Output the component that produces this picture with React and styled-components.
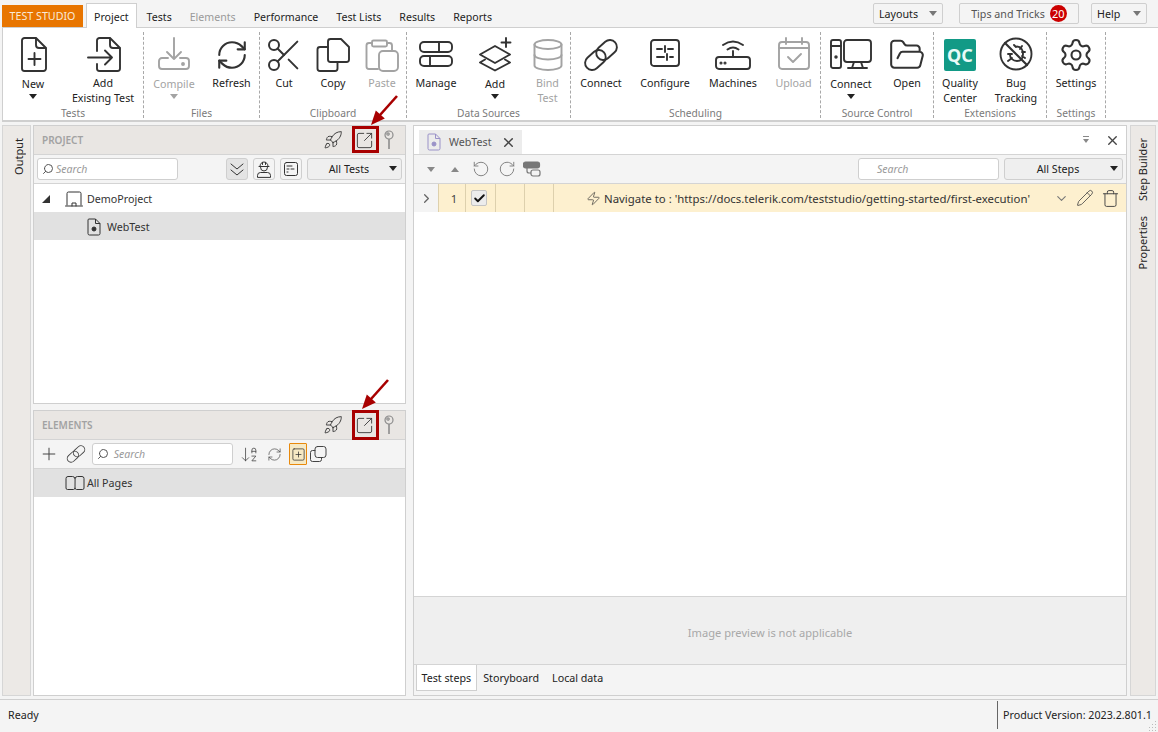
import React from "react";
import styled, { createGlobalStyle } from "styled-components";
import {
  RefreshCw, Scissors, Database, FolderOpen, Settings, Rocket, SquareArrowOutUpRight,
  Search, Plus, SquarePlus, ArrowDownAZ, X, RotateCcw, RotateCw, Zap, ChevronDown, Pencil, Trash, Check,
} from "lucide-react";

const GlobalStyle = createGlobalStyle`
  html, body { margin: 0; padding: 0; }
  body { background: #f4f4f4; font-family: "Noto Sans", "Open Sans", sans-serif; font-size: 10.7px; color: #222; }
  * { box-sizing: border-box; }
`;

const Page = styled.div`
  width: 1158px;
  height: 732px;
  overflow: hidden;
  display: flex;
  flex-direction: column;
  background: #f4f4f4;
`;

const TabRow = styled.div`
  height: 28px;
  display: flex;
  align-items: flex-end;
  padding: 0 11px 0 2px;
  position: relative;
  z-index: 1;
  margin-bottom: -1px;
`;

const Brand = styled.div`
  width: 81px;
  height: 22px;
  margin-right: 3px;
  margin-bottom: 1px;
  background: #e87500;
  color: #f9ead8;
  display: flex;
  align-items: center;
  justify-content: center;
`;

const TopTab = styled.div`
  height: ${(p) => (p.$active ? "25px" : "23px")};
  padding: ${(p) => (p.$active ? "2px 7px 0" : "2px 9px 0")};
  margin: ${(p) => (p.$active ? "0 1px 0 0" : "0 0 1px 0")};
  display: flex;
  align-items: center;
  font-size: 10.6px;
  background: ${(p) => (p.$active ? "#fff" : "transparent")};
  border: ${(p) => (p.$active ? "1px solid #cfcfcf" : "none")};
  border-bottom: none;
  color: ${(p) => (p.$off ? "#9a9a9a" : "#222")};
`;

const TopButtons = styled.div`
  margin-left: auto;
  align-self: flex-start;
  margin-top: 3px;
  display: flex;
`;

const TopButton = styled.div`
  width: ${(p) => p.$w}px;
  margin-left: ${(p) => p.$gap}px;
  height: 21px;
  border: 1px solid #cfcfcf;
  border-radius: 2px;
  background: #f4f4f4;
  display: flex;
  align-items: center;
  justify-content: ${(p) => (p.$center ? "center" : "space-between")};
  padding: 0 5px;
  gap: 5px;
  color: ${(p) => (p.$center ? "#555" : "#222")};
`;

const Caret = styled.span`
  display: block;
  width: 0;
  height: 0;
  border-left: ${(p) => p.$s || 4}px solid transparent;
  border-right: ${(p) => p.$s || 4}px solid transparent;
  border-top: ${(p) => (p.$s || 4) + 1}px solid ${(p) => p.$color || "#777"};
  flex: none;
`;

const CaretUp = styled(Caret)`
  transform: rotate(180deg);
`;

const Badge = styled.span`
  width: 17px;
  height: 17px;
  border-radius: 50%;
  background: #cc0000;
  color: #fff;
  font-size: 11px;
  display: flex;
  align-items: center;
  justify-content: center;
`;

const Ribbon = styled.div`
  height: 95px;
  margin-left: 2px;
  padding-top: 4px;
  background: #fff;
  border-left: 1px solid #cfcfcf;
  border-top: 1px solid #cfcfcf;
  border-bottom: 2px solid #cfcfcf;
  display: flex;
  align-items: flex-start;
`;

const Group = styled.div`
  width: ${(p) => p.$w}px;
  height: 86px;
  display: flex;
  flex-direction: column;
  border-right: 1px dashed #a8a8a8;
`;

const GroupItems = styled.div`
  flex: 1;
  display: flex;
`;

const GroupLabel = styled.div`
  height: 14px;
  margin-bottom: -2px;
  line-height: 14px;
  text-align: center;
  color: #7a7a7a;
  font-size: 10.2px;
`;

const Item = styled.div`
  width: ${(p) => p.$w}px;
  padding-top: 5px;
  display: flex;
  flex-direction: column;
  align-items: center;
  color: ${(p) => (p.$off ? "#a3a3a3" : "#333")};
`;

const ItemIcon = styled.div`
  height: 36px;
  display: flex;
  align-items: center;
  justify-content: center;
  margin-bottom: ${(p) => (p.$menu ? 4 : 3)}px;
`;

const ItemLabel = styled.div`
  line-height: 15px;
  text-align: center;
  white-space: nowrap;
  color: ${(p) => (p.$off ? "#a3a3a3" : "#222")};
`;

const ItemCaret = styled.div`
  margin-top: 2px;
`;

const QcMark = styled.div`
  width: 32px;
  height: 32px;
  border-radius: 2px;
  background: #129a86;
  color: #e9fbf7;
  font-size: 18px;
  font-weight: 700;
  display: flex;
  align-items: center;
  justify-content: center;
`;

const Main = styled.div`
  height: 571px;
  margin-top: 3px;
  padding-left: 2px;
  display: flex;
`;

const Rail = styled.div`
  width: ${(p) => p.$w}px;
  margin: ${(p) => p.$margin};
  background: #ece9e6;
  border: 1px solid #d6d6d6;
  padding: 12px ${(p) => p.$right || 0}px 0 ${(p) => p.$left || 0}px;
  display: flex;
  flex-direction: column;
  align-items: center;
  gap: 15px;
`;

const RailText = styled.div`
  writing-mode: vertical-rl;
  transform: rotate(180deg);
  color: #222;
  font-size: 11px;
  line-height: 15px;
`;

const LeftColumn = styled.div`
  width: 373px;
  display: flex;
  flex-direction: column;
  gap: 6px;
`;

const Panel = styled.div`
  height: ${(p) => p.$h}px;
  background: #fff;
  border: 1px solid #cfcfcf;
  display: flex;
  flex-direction: column;
`;

const PanelHead = styled.div`
  height: 29px;
  flex: none;
  display: flex;
  align-items: center;
  padding: 0 6px 0 8px;
  background: #e9e6e3;
  border-bottom: 1px solid #d4d4d4;
  color: #333;
`;

const PanelTitle = styled.div`
  font-size: 10px;
  font-weight: 600;
  color: #a2a2a2;
  margin-right: auto;
`;

const PopOut = styled.div`
  width: 27px;
  height: 27px;
  margin-left: 9px;
  padding-right: 3px;
  position: relative;
  display: flex;
  align-items: center;
  justify-content: center;
`;

const Highlight = styled.div`
  position: absolute;
  left: 0;
  top: ${(p) => p.$top}px;
  width: 27px;
  height: ${(p) => p.$h}px;
  border: 3px solid #a80000;
`;

const ArrowMark = styled.svg`
  position: absolute;
  left: ${(p) => p.$left}px;
  top: -35px;
  z-index: 5;
`;

const PinWrap = styled.div`
  width: 20px;
  display: flex;
  justify-content: center;
  color: #8c8c8c;
`;

const Toolbar = styled.div`
  height: 29px;
  flex: none;
  display: flex;
  align-items: center;
  padding: ${(p) => p.$padding || "0 3px"};
  background: #f4f4f4;
  border-bottom: 1px solid #d4d4d4;
`;

const SearchBox = styled.div`
  width: ${(p) => p.$w}px;
  height: 22px;
  flex: none;
  margin-left: ${(p) => p.$left || 0}px;
  padding-left: ${(p) => p.$inset || 4}px;
  background: #fff;
  border: 1px solid #cfcfcf;
  border-radius: 3px;
  display: flex;
  align-items: center;
  gap: 2px;
  color: #999;
  font-style: italic;
  font-size: 10.5px;
`;

const SearchGlyph = styled(Search)`
  transform: scaleX(-1);
  color: #555;
`;

const ToolButton = styled.div`
  width: 22px;
  height: 22px;
  margin-left: ${(p) => p.$left || 0}px;
  background: ${(p) => (p.$on ? "#e4e4e4" : "#f4f4f4")};
  border: 1px solid #cfcfcf;
  border-radius: 3px;
  display: flex;
  align-items: center;
  justify-content: center;
  color: #333;
`;

const Dropdown = styled.div`
  width: ${(p) => p.$w}px;
  height: 22px;
  margin-left: ${(p) => p.$left}px;
  padding-right: 11px;
  flex: none;
  position: relative;
  background: #efefef;
  border: 1px solid #cfcfcf;
  border-radius: 3px;
  display: flex;
  align-items: center;
  justify-content: center;
  color: #222;
`;

const DropCaret = styled.span`
  position: absolute;
  right: 4px;
  top: 7px;
`;

const TreeRow = styled.div`
  height: 28px;
  flex: none;
  display: flex;
  align-items: center;
  gap: ${(p) => p.$gap || 4}px;
  padding-left: ${(p) => p.$indent}px;
  padding-top: ${(p) => (p.$nudge ? 2 : 0)}px;
  background: ${(p) => (p.$selected ? "#e1e1e1" : "transparent")};
  color: #333;
`;

const TreeArrow = styled.svg`
  margin-right: 11px;
`;

const ElementTool = styled.div`
  width: ${(p) => p.$w || 22}px;
  height: 22px;
  flex: none;
  margin-left: ${(p) => p.$left || 0}px;
  display: flex;
  align-items: center;
  justify-content: center;
  color: ${(p) => p.$color || "#444"};
`;

const ExpandToggle = styled.div`
  width: 18px;
  height: 22px;
  flex: none;
  margin-left: 4px;
  background: #f6e9c4;
  border: 1px solid #e8890c;
  border-radius: 1px;
  display: flex;
  align-items: center;
  justify-content: center;
  color: #333;
`;

const Editor = styled.div`
  width: 714px;
  margin-left: 7px;
  background: #fff;
  border: 1px solid #cfcfcf;
  display: flex;
  flex-direction: column;
`;

const EditorTabs = styled.div`
  height: 29px;
  flex: none;
  display: flex;
  align-items: flex-end;
  padding: 0 6px 0 5px;
  border-bottom: 1px solid #d4d4d4;
`;

const DocTab = styled.div`
  width: 103px;
  height: 24px;
  padding: 0 6px 0 8px;
  display: flex;
  align-items: center;
  gap: 8px;
  background: #ececec;
  color: #555;
`;

const TabClose = styled(X)`
  margin-left: auto;
  color: #444;
`;

const TabTools = styled.div`
  margin-left: auto;
  align-self: center;
  display: flex;
  align-items: center;
  gap: 15px;
  color: #444;
`;

const StepRow = styled.div`
  height: 28px;
  flex: none;
  display: flex;
  background: #fdf0cf;
`;

const StepCell = styled.div`
  width: ${(p) => p.$w}px;
  flex: none;
  padding-left: ${(p) => p.$pad || 0}px;
  display: flex;
  align-items: center;
  justify-content: center;
  border-right: 1px solid #ddd0ad;
  background: ${(p) => (p.$grey ? "#f4f4f4" : "transparent")};
  color: #444;
  font-size: 11.4px;
`;

const StepCheck = styled.div`
  width: 16px;
  height: 16px;
  margin-right: 3px;
  background: #ececec;
  border: 1px solid #c4c4c4;
  border-radius: 2px;
  display: flex;
  align-items: center;
  justify-content: center;
  color: #111;
`;

const StepBody = styled.div`
  flex: 1;
  min-width: 0;
  padding: 0 6px 0 32px;
  display: flex;
  align-items: center;
  gap: 3px;
  color: #333;
  font-size: 11.4px;
  white-space: nowrap;
`;

const StepActions = styled.div`
  margin-left: auto;
  display: flex;
  align-items: center;
  gap: 7px;
  color: #444;
`;

const EditorFill = styled.div`
  flex: 1;
`;

const Preview = styled.div`
  height: 69px;
  flex: none;
  padding-top: 4px;
  background: #efefef;
  border-top: 1px solid #d4d4d4;
  border-bottom: 1px solid #d4d4d4;
  display: flex;
  align-items: center;
  justify-content: center;
  color: #a8a8a8;
  font-size: 11.1px;
`;

const BottomTabs = styled.div`
  height: 30px;
  flex: none;
  display: flex;
  padding-left: 2px;
  background: #f4f4f4;
  color: #222;
`;

const BottomTab = styled.div`
  height: 26px;
  padding: 0 ${(p) => (p.$active ? "4.5px" : "6.5px")};
  display: flex;
  align-items: center;
  background: ${(p) => (p.$active ? "#fff" : "transparent")};
  border: ${(p) => (p.$active ? "1px solid #cfcfcf" : "none")};
  border-top: none;
`;

const StatusBar = styled.div`
  height: 33px;
  margin-top: 3px;
  border-top: 1px solid #cfcfcf;
  padding: 0 0 2px 8px;
  display: flex;
  align-items: center;
  position: relative;
  color: #222;
`;

const StatusVersion = styled.div`
  margin-left: auto;
  width: 161px;
  height: 28px;
  padding-left: 5px;
  border-left: 1px solid #666;
  display: flex;
  align-items: center;
  white-space: nowrap;
`;

const Grip = styled.svg`
  position: absolute;
  right: 0;
  bottom: 0;
`;

const Line = ({ w = 36, h = 36, sw = 1.9, children }) => (
  <svg width={w} height={h} viewBox={`0 0 ${w} ${h}`} fill="none" stroke="currentColor" strokeWidth={sw} strokeLinecap="round" strokeLinejoin="round">
    {children}
  </svg>
);

const NewIcon = () => (
  <Line>
    <path d="M7 3.500A2.500 2.500 0 0 1 9.500 1H21l10 10v20.500a2.500 2.500 0 0 1-2.500 2.500h-19A2.500 2.500 0 0 1 7 31.500z" />
    <path d="M21 1.500V8a3 3 0 0 0 3 3h6.500M19.500 16v12M13.500 22h12" />
  </Line>
);
const AddExistingIcon = () => (
  <Line>
    <path d="M12 14V3.500A2.500 2.500 0 0 1 14.500 1H25l10 10v20.500a2.500 2.500 0 0 1-2.500 2.500h-18a2.500 2.500 0 0 1-2.500-2.500V27" />
    <path d="M25 1.500V8a3 3 0 0 0 3 3h6.500M3 20.500h24M20 13.500l7 7-7 7" />
  </Line>
);
const CompileIcon = () => (
  <Line>
    <path d="M18 1v21M11 15l7 7 7-7" />
    <path d="M12 21H6a3 3 0 0 0-3 3v5a3 3 0 0 0 3 3h24a3 3 0 0 0 3-3v-5a3 3 0 0 0-3-3h-6" />
    <circle cx="27" cy="27" r="1" />
  </Line>
);
const CopyIcon = () => (
  <Line>
    <path d="M13 4.500A2.500 2.500 0 0 1 15.500 2H26l8 8v12.500a2.500 2.500 0 0 1-2.500 2.500h-16a2.500 2.500 0 0 1-2.500-2.500z" />
    <path d="M13 10H5a2.500 2.500 0 0 0-2.500 2.500v19A2.500 2.500 0 0 0 5 34h15a2.500 2.500 0 0 0 2.500-2.500V25" />
  </Line>
);
const PasteIcon = () => (
  <Line>
    <path d="M8 6H5a2.500 2.500 0 0 0-2.500 2.500v21A2.500 2.500 0 0 0 5 32h9M23 6h2.500A2.500 2.500 0 0 1 28 8.500V13" />
    <rect x="8" y="3.500" width="15" height="6" rx="1.500" />
    <rect x="15" y="14" width="19" height="20" rx="4" />
  </Line>
);
const ManageIcon = () => (
  <Line>
    <rect x="2" y="5" width="32" height="10" rx="4" />
    <rect x="2" y="19" width="32" height="10" rx="4" />
    <path d="M21 5v10M12 19v10" />
  </Line>
);
const AddLayersIcon = () => (
  <Line>
    <path d="M18 9L33 17.500 18 26 3 17.500z" />
    <path d="M8 22.500L3 25.500 18 33.500 33 25.500 28 22.500M29 1v9M24.500 5.500h9" />
  </Line>
);
const LinkIcon = ({ size = 40, sw = 1.9 }) => (
  <svg width={size} height={size} viewBox="0 0 40 40" fill="none" stroke="currentColor" strokeWidth={sw}>
    <g transform="rotate(-42 20 20)">
      <rect x="1" y="13" width="23" height="14" rx="7" />
      <rect x="16" y="13" width="23" height="14" rx="7" />
    </g>
  </svg>
);
const ConfigureIcon = () => (
  <Line>
    <rect x="4" y="3" width="28" height="26" rx="3" />
    <path d="M10 12h5M21 12h5M18 9v6M10 20h7M23 20h3M20 17v6" />
  </Line>
);
const MachinesIcon = () => (
  <Line>
    <rect x="1" y="20" width="34" height="12" rx="3" />
    <path d="M18 14v6M8 8q10-7 20 0M12.500 12.500q5.500-4 11 0" />
    <circle cx="6" cy="26" r="0.600" />
    <circle cx="10" cy="26" r="0.600" />
  </Line>
);
const UploadIcon = () => (
  <Line>
    <rect x="3" y="5" width="30" height="27" rx="3" />
    <path d="M10 1v6M26 1v6M3 11h30M12 20l5 5 8-8" />
  </Line>
);
const ComputerIcon = () => (
  <Line w={42}>
    <rect x="1" y="3" width="10" height="28" rx="2" />
    <rect x="14" y="3" width="27" height="22" rx="3" />
    <path d="M1 9h10M24 25l-2 6M31 25l2 6M18 31h19" />
    <circle cx="6" cy="20" r="0.800" />
  </Line>
);
const BugIcon = () => (
  <Line>
    <circle cx="18" cy="17" r="15.500" />
    <path d="M7 6l22 22" strokeWidth="2.200" />
    <path d="M19 9.500c4 0 6 3.500 6 7.500s-2 7-6 7-7-3-7-6M16 8l2 2M24 9l-2 3M27 15h-3M27 21l-3-2M10 17h4M10 24l4-3" />
  </Line>
);

const PinIcon = () => (
  <svg width="12" height="20" viewBox="0 0 12 20" fill="none" stroke="currentColor" strokeWidth="1.200">
    <circle cx="6" cy="5" r="4" />
    <path d="M6 9v10" strokeWidth="1.600" />
    <circle cx="5" cy="4" r="1.200" />
  </svg>
);
const RedArrow = ({ left }) => (
  <ArrowMark $left={left} width="32" height="32" viewBox="0 0 32 32">
    <path d="M29 2L12 21" stroke="#a80000" strokeWidth="2.600" />
    <polygon points="3,31 7.800,16.600 16.800,24.600" fill="#a80000" />
  </ArrowMark>
);
const ChevronPairIcon = () => (
  <Line w={16} h={16} sw={1}>
    <path d="M2 3l6 5 6-5M2 9l6 5 6-5" />
  </Line>
);
const WorkerIcon = () => (
  <Line w={16} h={18} sw={1}>
    <path d="M4 6a4 4 0 0 1 8 0M3 6.500h10M4.500 7.500a3.500 3.500 0 0 0 7 0M1.500 17v-1.500a3 3 0 0 1 3-3h7a3 3 0 0 1 3 3V17zM6.500 2.500v2M9.500 2.500v2" />
  </Line>
);
const NotesIcon = () => (
  <Line w={16} h={16} sw={1}>
    <rect x="1.500" y="1.500" width="13" height="13" rx="2" />
    <path d="M4 5h5M4 8h2M4 11h1M8 8h3" />
  </Line>
);
const ProjectIcon = () => (
  <Line w={18} h={16} sw={1}>
    <path d="M2 14V2.500A1.500 1.500 0 0 1 3.500 1h11A1.500 1.500 0 0 1 16 2.500V14M0.500 15h17M7 15v-3h4v3" />
  </Line>
);
const TestDocIcon = ({ color }) => (
  <svg width="14" height="18" viewBox="0 0 14 18" fill="none" stroke={color} strokeWidth="1">
    <path d="M2 1h6.500L13 5.500V15.500a1.500 1.500 0 0 1-1.500 1.500h-9A1.500 1.500 0 0 1 1 15.500V2A1 1 0 0 1 2 1zM8.500 1v4.500H13" />
    <circle cx="7" cy="11" r="2" fill={color} />
  </svg>
);
const BookIcon = () => (
  <Line w={20} h={16} sw={1}>
    <path d="M10 3.500A2.500 2.500 0 0 0 7.500 1.500H3A2 2 0 0 0 1 3.500V13a1.500 1.500 0 0 0 1.500 1.500h6A1.500 1.500 0 0 0 10 13zM10 3.500a2.500 2.500 0 0 1 2.500-2H17a2 2 0 0 1 2 2V13a1.500 1.500 0 0 1-1.500 1.500h-6A1.500 1.500 0 0 1 10 13" />
  </Line>
);
const CopyTinyIcon = () => (
  <Line w={18} h={18} sw={1}>
    <rect x="6" y="1.500" width="11" height="11" rx="2.500" />
    <path d="M6 5.500H3.500a2 2 0 0 0-2 2V14.500a2 2 0 0 0 2 2H10.500a2 2 0 0 0 2-2V12.500" />
  </Line>
);
const StoryIcon = () => (
  <svg width="18" height="16" viewBox="0 0 18 16" fill="none" stroke="#777" strokeWidth="1.200">
    <rect x="0.500" y="1" width="16" height="6" rx="2" fill="#777" />
    <rect x="8" y="9" width="9" height="6" rx="2" />
    <path d="M4 7v3a2 2 0 0 0 2 2h2" />
  </svg>
);
const PinMenuIcon = () => (
  <svg width="8" height="8" viewBox="0 0 8 8" fill="#888">
    <rect x="1" y="0" width="6" height="1" />
    <polygon points="1,3 7,3 4,7" />
  </svg>
);

const ribbon = [
  { label: "Tests", w: 141, items: [
    { w: 60, icon: <NewIcon />, label: ["New"], menu: true },
    { w: 80, icon: <AddExistingIcon />, label: ["Add", "Existing Test"] },
  ] },
  { label: "Files", w: 116, items: [
    { w: 60, icon: <CompileIcon />, label: ["Compile"], menu: true, off: true },
    { w: 55, icon: <RefreshCw size={34} strokeWidth={1.5} />, label: ["Refresh"] },
  ] },
  { label: "Clipboard", w: 147, items: [
    { w: 48, icon: <Scissors size={40} strokeWidth={1.200} />, label: ["Cut"] },
    { w: 50, icon: <CopyIcon />, label: ["Copy"] },
    { w: 48, icon: <PasteIcon />, label: ["Paste"], off: true },
  ] },
  { label: "Data Sources", w: 164, items: [
    { w: 58, icon: <ManageIcon />, label: ["Manage"] },
    { w: 60, icon: <AddLayersIcon />, label: ["Add"], menu: true },
    { w: 45, icon: <Database size={36} strokeWidth={1.300} />, label: ["Bind", "Test"], off: true },
  ] },
  { label: "Scheduling", w: 250, items: [
    { w: 60, icon: <LinkIcon />, label: ["Connect"] },
    { w: 68, icon: <ConfigureIcon />, label: ["Configure"] },
    { w: 68, icon: <MachinesIcon />, label: ["Machines"] },
    { w: 53, icon: <UploadIcon />, label: ["Upload"], off: true },
  ] },
  { label: "Source Control", w: 113, items: [
    { w: 60, icon: <ComputerIcon />, label: ["Connect"], menu: true },
    { w: 52, icon: <FolderOpen size={38} strokeWidth={1.300} />, label: ["Open"] },
  ] },
  { label: "Extensions", w: 113, items: [
    { w: 52, icon: <QcMark>QC</QcMark>, label: ["Quality", "Center"] },
    { w: 60, icon: <BugIcon />, label: ["Bug", "Tracking"] },
  ] },
  { label: "Settings", w: 59, items: [
    { w: 58, icon: <Settings size={36} strokeWidth={1.400} />, label: ["Settings"] },
  ] },
];

const tabs = ["Tests", "Elements", "Performance", "Test Lists", "Results", "Reports"];

function PanelHeader({ title, boxTop, boxHeight, arrowLeft }) {
  return (
    <PanelHead>
      <PanelTitle>{title}</PanelTitle>
      <Rocket size={20} strokeWidth={1.100} />
      <PopOut>
        <SquareArrowOutUpRight size={19} strokeWidth={1.100} />
        <Highlight $top={boxTop} $h={boxHeight}>
          <RedArrow left={arrowLeft} />
        </Highlight>
      </PopOut>
      <PinWrap><PinIcon /></PinWrap>
    </PanelHead>
  );
}

function App() {
  return (
    <Page>
      <GlobalStyle />
      <TabRow>
        <Brand>TEST STUDIO</Brand>
        <TopTab $active>Project</TopTab>
        {tabs.map((t) => (
          <TopTab key={t} $off={t === "Elements"}>{t}</TopTab>
        ))}
        <TopButtons>
          <TopButton $w={70} $gap={0}>Layouts<Caret /></TopButton>
          <TopButton $w={120} $gap={16} $center>Tips and Tricks<Badge>20</Badge></TopButton>
          <TopButton $w={56} $gap={12}>Help<Caret /></TopButton>
        </TopButtons>
      </TabRow>

      <Ribbon>
        {ribbon.map((g) => (
          <Group key={g.label} $w={g.w}>
            <GroupItems>
              {g.items.map((it, i) => (
                <Item key={i} $w={it.w} $off={it.off}>
                  <ItemIcon $menu={it.menu}>{it.icon}</ItemIcon>
                  {it.label.map((l) => (
                    <ItemLabel key={l} $off={it.off}>{l}</ItemLabel>
                  ))}
                  {it.menu && <ItemCaret><Caret $color={it.off ? "#a3a3a3" : "#222"} /></ItemCaret>}
                </Item>
              ))}
            </GroupItems>
            <GroupLabel>{g.label}</GroupLabel>
          </Group>
        ))}
      </Ribbon>

      <Main>
        <Rail $w={29} $margin="0 2px 0 0" $left={3}><RailText>Output</RailText></Rail>
        <LeftColumn>
          <Panel $h={279}>
            <PanelHeader title="PROJECT" boxTop={-1} boxHeight={27} arrowLeft={13} />
            <Toolbar>
              <SearchBox $w={141}><SearchGlyph size={12} />Search</SearchBox>
              <ToolButton $left={48} $on><ChevronPairIcon /></ToolButton>
              <ToolButton $left={5}><WorkerIcon /></ToolButton>
              <ToolButton $left={5}><NotesIcon /></ToolButton>
              <Dropdown $w={95} $left={5}>All Tests<DropCaret><Caret $color="#222" /></DropCaret></Dropdown>
            </Toolbar>
            <TreeRow $indent={8} $nudge>
              <TreeArrow width="8" height="8" viewBox="0 0 8 8"><polygon points="8,0 8,8 0,8" fill="#333" /></TreeArrow>
              <ProjectIcon />DemoProject
            </TreeRow>
            <TreeRow $indent={53} $gap={6} $selected $nudge><TestDocIcon color="#333" />WebTest</TreeRow>
          </Panel>
          <Panel $h={286}>
            <PanelHeader title="ELEMENTS" boxTop={-2} boxHeight={30} arrowLeft={4} />
            <Toolbar $padding="0 0 0 4px">
              <ElementTool $w={22}><Plus size={20} strokeWidth={1.200} /></ElementTool>
              <ElementTool $w={32}><LinkIcon size={22} sw={1.700} /></ElementTool>
              <SearchBox $w={141}><SearchGlyph size={12} />&nbsp;Search</SearchBox>
              <ElementTool $w={28} $left={2}><ArrowDownAZ size={19} strokeWidth={1} /></ElementTool>
              <ElementTool $w={22}><RefreshCw size={15} strokeWidth={1.100} /></ElementTool>
              <ExpandToggle><SquarePlus size={15} strokeWidth={1.200} /></ExpandToggle>
              <ElementTool $w={22}><CopyTinyIcon /></ElementTool>
            </Toolbar>
            <TreeRow $indent={31} $gap={2} $selected><BookIcon />All Pages</TreeRow>
          </Panel>
        </LeftColumn>

        <Editor>
          <EditorTabs>
            <DocTab>
              <TestDocIcon color="#9a92c8" />WebTest
              <TabClose size={15} strokeWidth={2.400} />
            </DocTab>
            <TabTools>
              <PinMenuIcon />
              <X size={15} strokeWidth={2.200} />
            </TabTools>
          </EditorTabs>
          <Toolbar $padding="0 3px 0 13px">
            <Caret $color="#888" />
            <ElementTool $w={20} $left={10}><CaretUp $color="#888" /></ElementTool>
            <ElementTool $w={24} $left={4} $color="#777"><RotateCcw size={18} strokeWidth={1.200} /></ElementTool>
            <ElementTool $w={28} $color="#777"><RotateCw size={18} strokeWidth={1.200} /></ElementTool>
            <ElementTool $w={22}><StoryIcon /></ElementTool>
            <SearchBox $w={141} $left={315} $inset={18}>Search</SearchBox>
            <Dropdown $w={119} $left={5}>All Steps<DropCaret><Caret $color="#222" /></DropCaret></Dropdown>
          </Toolbar>
          <StepRow>
            <StepCell $w={25} $grey><ChevronDown size={15} strokeWidth={2} color="#666" style={{ transform: "rotate(-90deg)" }} /></StepCell>
            <StepCell $w={27} $pad={4}>1</StepCell>
            <StepCell $w={30}><StepCheck><Check size={13} strokeWidth={3.500} /></StepCheck></StepCell>
            <StepCell $w={29} />
            <StepCell $w={29} />
            <StepBody>
              <Zap size={15} strokeWidth={1.100} />
              Navigate to : 'https://docs.telerik.com/teststudio/getting-started/first-execution'
              <StepActions>
                <ChevronDown size={15} strokeWidth={1.800} color="#777" />
                <Pencil size={18} strokeWidth={1.100} />
                <Trash size={19} strokeWidth={1.200} />
              </StepActions>
            </StepBody>
          </StepRow>
          <EditorFill />
          <Preview>Image preview is not applicable</Preview>
          <BottomTabs>
            <BottomTab $active>Test steps</BottomTab>
            <BottomTab>Storyboard</BottomTab>
            <BottomTab>Local data</BottomTab>
          </BottomTabs>
        </Editor>
        <Rail $w={26} $margin="0 0 0 3px" $right={1}>
          <RailText>Step Builder</RailText>
          <RailText>Properties</RailText>
        </Rail>
      </Main>

      <StatusBar>
        Ready
        <StatusVersion>Product Version: 2023.2.801.1</StatusVersion>
        <Grip width="12" height="12" viewBox="0 0 12 12" fill="#bbb">
          <rect x="9" y="1" width="1" height="1" />
          <rect x="6" y="4" width="1" height="1" />
          <rect x="9" y="4" width="1" height="1" />
          <rect x="3" y="7" width="1" height="1" />
          <rect x="6" y="7" width="1" height="1" />
          <rect x="9" y="7" width="1" height="1" />
          <rect x="3" y="10" width="1" height="1" />
          <rect x="6" y="10" width="1" height="1" />
          <rect x="9" y="10" width="1" height="1" />
        </Grip>
      </StatusBar>
    </Page>
  );
}

export default App;
